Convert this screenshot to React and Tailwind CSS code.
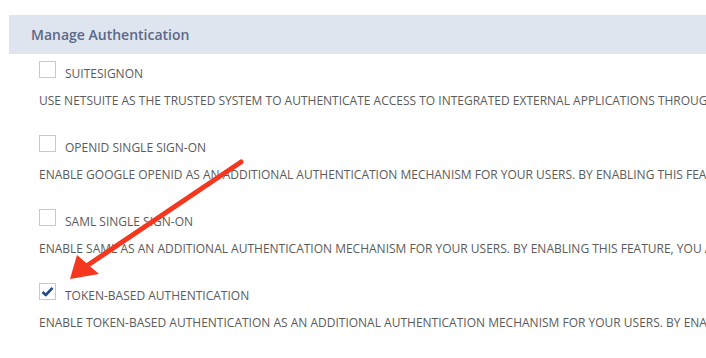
import React from 'react';

const items = [
  {
    label: 'SUITESIGNON',
    desc: 'USE NETSUITE AS THE TRUSTED SYSTEM TO AUTHENTICATE ACCESS TO INTEGRATED EXTERNAL APPLICATIONS THROUGH SUITESIGNON CONNECTIONS.',
    checked: false,
  },
  {
    label: 'OPENID SINGLE SIGN-ON',
    desc: 'ENABLE GOOGLE OPENID AS AN ADDITIONAL AUTHENTICATION MECHANISM FOR YOUR USERS. BY ENABLING THIS FEATURE, YOU AGREE TO THE TERMS.',
    checked: false,
  },
  {
    label: 'SAML SINGLE SIGN-ON',
    desc: 'ENABLE SAML AS AN ADDITIONAL AUTHENTICATION MECHANISM FOR YOUR USERS. BY ENABLING THIS FEATURE, YOU AGREE TO THE TERMS.',
    checked: false,
  },
  {
    label: 'TOKEN-BASED AUTHENTICATION',
    desc: 'ENABLE TOKEN-BASED AUTHENTICATION AS AN ADDITIONAL AUTHENTICATION MECHANISM FOR YOUR USERS. BY ENABLING THIS FEATURE, YOU AGREE.',
    checked: true,
  },
];

function Checkbox({ checked }) {
  return (
    <div className="w-[17px] h-[17px] border border-[#c9c9c9] bg-white flex items-center justify-center shrink-0">
      {checked && (
        <svg width="13" height="11" viewBox="0 0 13 11">
          <path d="M1.5 6 L4.8 9 L11.5 1.8" fill="none" stroke="#234a8c" strokeWidth="2.6" strokeLinejoin="round" />
        </svg>
      )}
    </div>
  );
}

export default function App() {
  return (
    <div
      className="relative w-[706px] h-[358px] bg-white overflow-hidden pt-[15px] pl-[9px]"
      style={{ fontFamily: '"Open Sans", sans-serif' }}
    >
      {/* section header */}
      <div className="h-[39px] bg-[#dfe5ef] flex items-center pl-[22px]">
        <span className="text-[14px] font-semibold text-[#5a6889] whitespace-nowrap">Manage Authentication</span>
      </div>

      {/* feature list */}
      <div className="pl-[30px] pt-[7px]">
        {items.map((it) => (
          <div key={it.label} className="h-[74px]">
            <div className="flex items-start gap-[9px] h-[17px]">
              <Checkbox checked={it.checked} />
              <span className="text-[12px] leading-[16px] mt-[5px] text-[#5b5b5b] whitespace-nowrap">{it.label}</span>
            </div>
            <div className="mt-[15px] text-[12px] leading-[16px] text-[#5b5b5b] whitespace-nowrap">{it.desc}</div>
          </div>
        ))}
      </div>

      {/* red annotation arrow */}
      <svg className="absolute left-0 top-0 pointer-events-none" width="706" height="358">
        <line x1="241" y1="162" x2="88" y2="265" stroke="#f4381f" strokeWidth="5" strokeLinecap="round" />
        <polygon points="70,279 77,255 99,274" fill="#f4381f" />
      </svg>
    </div>
  );
}
